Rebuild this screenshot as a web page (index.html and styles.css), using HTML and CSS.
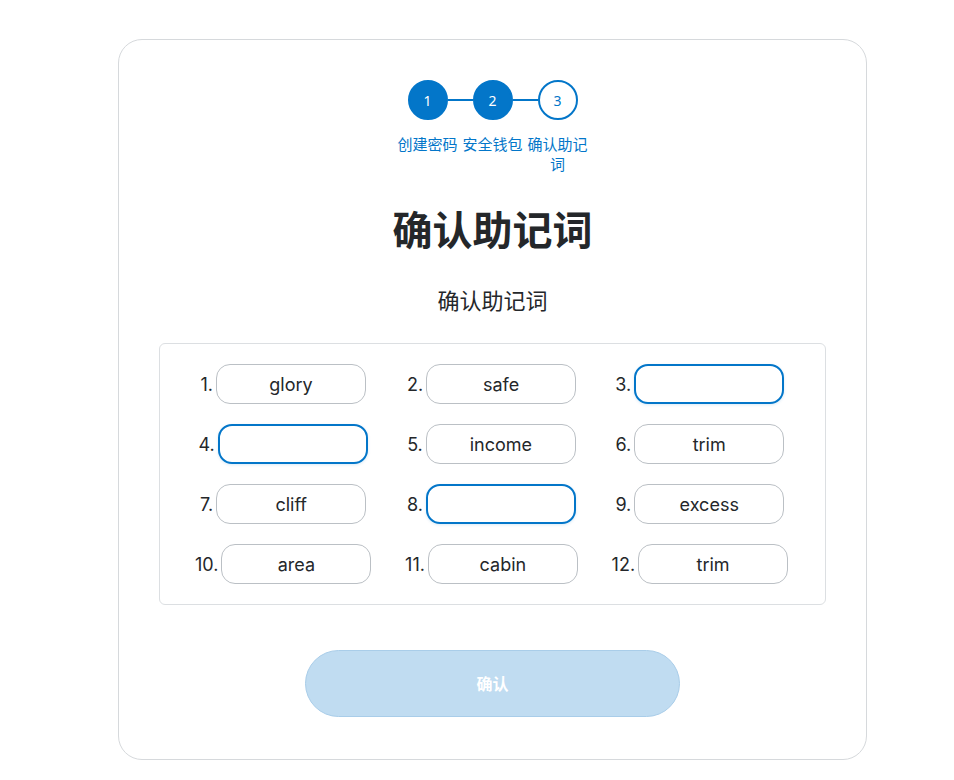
FILE: index.html
```html
<!DOCTYPE html>
<html lang="zh-CN">
<head>
    <meta charset="UTF-8">
    <meta name="viewport" content="width=device-width, initial-scale=1.0">
    <title>确认助记词</title>
    <link rel="stylesheet" href="styles.css">
</head>
<body>

    <!-- Onboarding card -->
    <div class="card">

        <!-- Step indicator -->
        <div class="steps">
            <div class="step-dots">
                <span class="dot done">1</span>
                <span class="bar"></span>
                <span class="dot done">2</span>
                <span class="bar"></span>
                <span class="dot current">3</span>
            </div>
            <div class="step-labels">
                <span>创建密码</span>
                <span>安全钱包</span>
                <span>确认助记词</span>
            </div>
        </div>

        <h1>确认助记词</h1>
        <h2>确认助记词</h2>

        <!-- Recovery phrase grid -->
        <div class="phrase">
            <div class="word"><label>1.</label><input type="text" value="glory" readonly></div>
            <div class="word"><label>2.</label><input type="text" value="safe" readonly></div>
            <div class="word"><label>3.</label><input type="text" class="blank"></div>
            <div class="word"><label>4.</label><input type="text" class="blank"></div>
            <div class="word"><label>5.</label><input type="text" value="income" readonly></div>
            <div class="word"><label>6.</label><input type="text" value="trim" readonly></div>
            <div class="word"><label>7.</label><input type="text" value="cliff" readonly></div>
            <div class="word"><label>8.</label><input type="text" class="blank"></div>
            <div class="word"><label>9.</label><input type="text" value="excess" readonly></div>
            <div class="word"><label>10.</label><input type="text" value="area" readonly></div>
            <div class="word"><label>11.</label><input type="text" value="cabin" readonly></div>
            <div class="word"><label>12.</label><input type="text" value="trim" readonly></div>
        </div>

        <button type="button" class="confirm" disabled>确认</button>
    </div>

</body>
</html>
```

FILE: styles.css
```css
/* General styling */
* {
    margin: 0;
    padding: 0;
    box-sizing: border-box;
}

body {
    background-color: #fff;
    color: #24272a;
    font-family: Inter, "Noto Sans", "Noto Sans CJK SC", sans-serif;
    padding-top: 39px;
}

/* Card */
.card {
    width: 749px;
    margin-left: 118px;
    border: 1px solid #d6d9dc;
    border-radius: 24px;
    padding: 40px 40px 42px;
    display: flex;
    flex-direction: column;
    align-items: center;
}

/* Step indicator */
.steps {
    display: flex;
    flex-direction: column;
    align-items: center;
}

.step-dots {
    display: flex;
    align-items: center;
}

.dot {
    width: 40px;
    height: 40px;
    border-radius: 50%;
    border: 2px solid #0376c9;
    display: flex;
    align-items: center;
    justify-content: center;
    font-size: 14px;
    font-family: "Noto Sans", sans-serif;
}

.dot.done {
    background-color: #0376c9;
    color: #fff;
}

.dot.current {
    background-color: #fff;
    color: #0376c9;
}

.bar {
    width: 25px;
    height: 2px;
    background-color: #0376c9;
}

.step-labels {
    display: flex;
    margin-top: 14px;
}

.step-labels span {
    width: 65px;
    text-align: center;
    font-size: 15px;
    line-height: 20px;
    color: #0376c9;
    font-family: "Noto Sans CJK SC", sans-serif;
}

/* Headings */
h1 {
    font-family: "Noto Sans CJK SC", sans-serif;
    font-size: 40px;
    font-weight: 700;
    line-height: 48px;
    margin-top: 30px;
}

h2 {
    font-family: "Noto Sans CJK SC", sans-serif;
    font-size: 22px;
    font-weight: 400;
    line-height: 30px;
    margin-top: 32px;
}

/* Phrase grid */
.phrase {
    width: 667px;
    margin-top: 29px;
    border: 1px solid #dcdfe2;
    border-radius: 6px;
    padding: 20px 21px 20px 19px;
    display: grid;
    grid-template-columns: repeat(3, 1fr);
    row-gap: 20px;
}

.word {
    justify-self: center;
    display: flex;
    align-items: center;
    gap: 3px;
}

.word label {
    font-size: 18px;
}

.word input {
    width: 150px;
    height: 40px;
    border: 1px solid #bbc0c5;
    border-radius: 14px;
    text-align: center;
    font-family: Inter, sans-serif;
    font-size: 18px;
    color: #24272a;
    outline: none;
    background: #fff;
}

.word input.blank {
    border: 2px solid #0376c9;
    box-shadow: 0 1px 3px rgba(3, 118, 201, 0.15);
}

/* Confirm button */
.confirm {
    margin-top: 45px;
    width: 375px;
    height: 67px;
    border-radius: 34px;
    border: 1px solid #a9cde9;
    background-color: #c0dcf1;
    color: #fff;
    font-family: "Noto Sans CJK SC", sans-serif;
    font-size: 16px;
    font-weight: 700;
    padding-bottom: 2px;
}
```
